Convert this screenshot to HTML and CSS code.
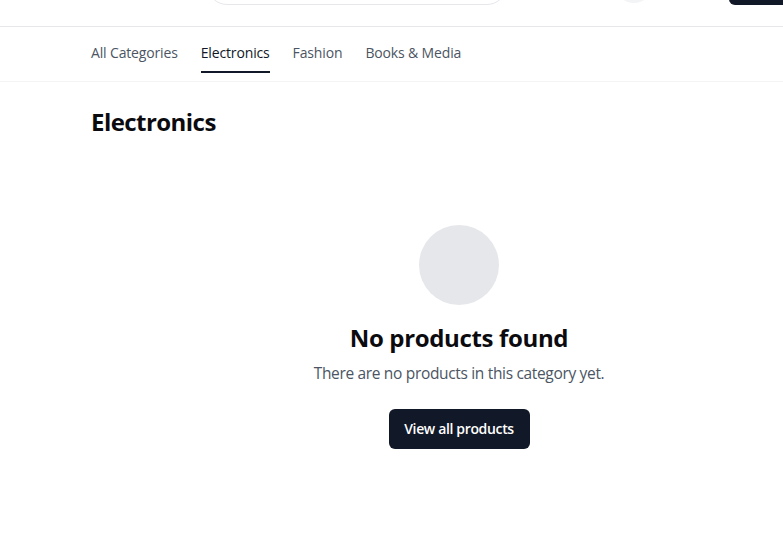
FILE: index.html
```html
<!DOCTYPE html>
<html lang="en">
<head>
<meta charset="utf-8">
<title>Electronics</title>
<link rel="stylesheet" href="styles.css">
</head>
<body>
<header class="site-header">
  <div class="header-inner">
    <div class="logo"></div>
    <div class="search"></div>
    <div class="header-spacer"></div>
    <div class="icon-btn"></div>
    <a class="header-cta" href="#" aria-label="Sign in"></a>
  </div>
</header>
<nav class="category-nav">
  <a class="tab" href="#">All Categories</a>
  <a class="tab active" href="#">Electronics</a>
  <a class="tab" href="#">Fashion</a>
  <a class="tab" href="#">Books &amp; Media</a>
</nav>
<main class="page">
  <h1 class="page-title">Electronics</h1>
  <section class="empty">
    <div class="empty-icon"></div>
    <h2 class="empty-title">No products found</h2>
    <p class="empty-text">There are no products in this category yet.</p>
    <a class="btn-primary" href="#">View all products</a>
  </section>
</main>
</body>
</html>
```
FILE: styles.css
```css
html, body {
  margin: 0;
  padding: 0;
  overflow: hidden;
  background: #ffffff;
}
body {
  font-family: "Open Sans", "Noto Sans", sans-serif;
  color: #111827;
  width: 783px;
}
a { text-decoration: none; }

.site-header {
  margin-top: -38px;
  height: 64px;
  border-bottom: 1px solid #e5e7eb;
  overflow: hidden;
}
.header-inner {
  height: 64px;
  box-sizing: border-box;
  display: flex;
  align-items: flex-end;
  padding: 0 0 21px 91px;
}
.logo {
  width: 116px;
  flex: none;
  height: 40px;
}
.search {
  width: 300px;
  height: 40px;
  flex: none;
  box-sizing: border-box;
  border: 1px solid #e5e7eb;
  border-radius: 9999px;
  background: #fff;
}
.header-spacer { width: 109px; flex: none; }
.icon-btn {
  width: 36px;
  height: 36px;
  flex: none;
  border-radius: 50%;
  background: #f3f4f6;
  margin-bottom: 2px;
}
.header-cta {
  margin-left: 77px;
  flex: none;
  height: 40px;
  width: 110px;
  border-radius: 6px;
  background: #111827;
}

.category-nav {
  display: flex;
  gap: 23px;
  padding: 8px 0 8px 91px;
  border-bottom: 1px solid #f3f4f6;
}
.tab {
  font-size: 14px;
  font-weight: 500;
  line-height: 20px;
  letter-spacing: -0.15px;
  padding: 8px 0;
  color: #4b5563;
  border-bottom: 2px solid transparent;
}
.tab.active {
  color: #111827;
  border-bottom-color: #111827;
}

.page {
  padding: 24px 0 0 91px;
}
.page-title {
  margin: 0;
  font-size: 24px;
  line-height: 32px;
  font-weight: 700;
  letter-spacing: -0.55px;
  color: #0b0b0f;
}
.empty {
  width: 736px;
  display: flex;
  flex-direction: column;
  align-items: center;
  padding-top: 87px;
}
.empty-icon {
  width: 80px;
  height: 80px;
  border-radius: 50%;
  background: #e5e7eb;
}
.empty-title {
  margin: 17px 0 0;
  font-size: 24px;
  line-height: 32px;
  font-weight: 700;
  letter-spacing: -0.35px;
  color: #0b0b0f;
}
.empty-text {
  margin: 7px 0 0;
  font-size: 15.5px;
  line-height: 24px;
  letter-spacing: -0.33px;
  color: #4b5563;
}
.btn-primary {
  margin-top: 24px;
  height: 40px;
  width: 141px;
  box-sizing: border-box;
  border-radius: 6px;
  background: #111827;
  color: #ffffff;
  font-size: 14px;
  font-weight: 600;
  line-height: 40px;
  text-align: center;
  letter-spacing: -0.35px;
}
```
